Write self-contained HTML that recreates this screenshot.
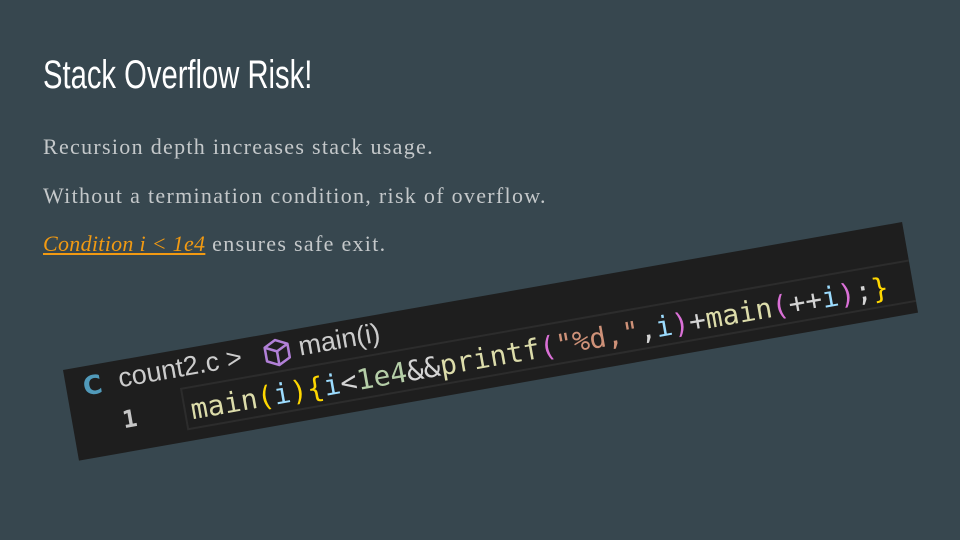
<!DOCTYPE html>
<html><head><meta charset="utf-8"><style>
html,body{margin:0;padding:0}
body{width:960px;height:540px;background:#37474f;position:relative;overflow:hidden}
.t{position:absolute;left:43px;top:53px;font:40px "Liberation Sans Narrow","Liberation Sans",sans-serif;color:#fff;transform-origin:0 0;transform:scaleX(0.73);white-space:nowrap}
.p{position:absolute;left:43px;font:22px "Liberation Serif",serif;color:#c4c8ca;white-space:nowrap;letter-spacing:1.3px}
.p a{color:#f29a12;font-style:italic;text-decoration:underline;letter-spacing:0.3px}
.code{position:absolute;left:63px;top:370px;width:852px;height:92px;background:#1e1e1e;transform-origin:0 0;transform:rotate(-10deg);overflow:hidden}
.code .row{position:absolute;left:112px;top:38px;width:760px;height:43px;border:2px solid #2c2c2c;box-sizing:border-box}
.code span{position:absolute;white-space:nowrap}
.bc{font:27px "Liberation Sans","DejaVu Sans",sans-serif;color:#cccccc;top:3px}
.cd{font:28px "DejaVu Sans Mono","Liberation Mono",monospace;top:45px;left:119px}
.cd span{position:static!important}
.y{color:#dcdcaa}.g{color:#ffd700}.b{color:#9cdcfe}.n{color:#b5cea8}.s{color:#ce9178}.k{color:#da70d6}.w{color:#d4d4d4}
</style></head><body>
<div class="t">Stack Overflow Risk!</div>
<div class="p" style="top:134px">Recursion depth increases stack usage.</div>
<div class="p" style="top:183px">Without a termination condition, risk of overflow.</div>
<div class="p" style="top:231px"><a>Condition i &lt; 1e4</a> ensures safe exit.</div>
<div class="code">
<div class="row"></div>
<span style="left:17px;top:6px;font:bold 26px 'DejaVu Sans',sans-serif;color:#519aba">C</span>
<span class="bc" style="left:53px">count2.c &gt;</span>
<svg style="position:absolute;left:199px;top:5px" width="30" height="30" viewBox="0 0 26 26" fill="none" stroke="#b180d7" stroke-width="2.2" stroke-linejoin="round"><path d="M13 2 L23 7 L23 19 L13 24 L3 19 L3 7 Z M3 7 L13 12 L23 7 M13 12 L13 24"/></svg>
<span class="bc" style="left:236px">main(i)</span>
<span style="left:50px;top:46px;font:bold 24px 'DejaVu Sans Mono',monospace;color:#c6c6c6">1</span>
<span class="cd"><span class="y">main</span><span class="g">(</span><span class="b">i</span><span class="g">){</span><span class="b">i</span><span class="w">&lt;</span><span class="n">1e4</span><span class="w">&amp;&amp;</span><span class="y">printf</span><span class="k">(</span><span class="s">"%d,"</span><span class="w">,</span><span class="b">i</span><span class="k">)</span><span class="w">+</span><span class="y">main</span><span class="k">(</span><span class="w">++</span><span class="b">i</span><span class="k">)</span><span class="w">;</span><span class="g">}</span></span>
</div>
</body></html>
